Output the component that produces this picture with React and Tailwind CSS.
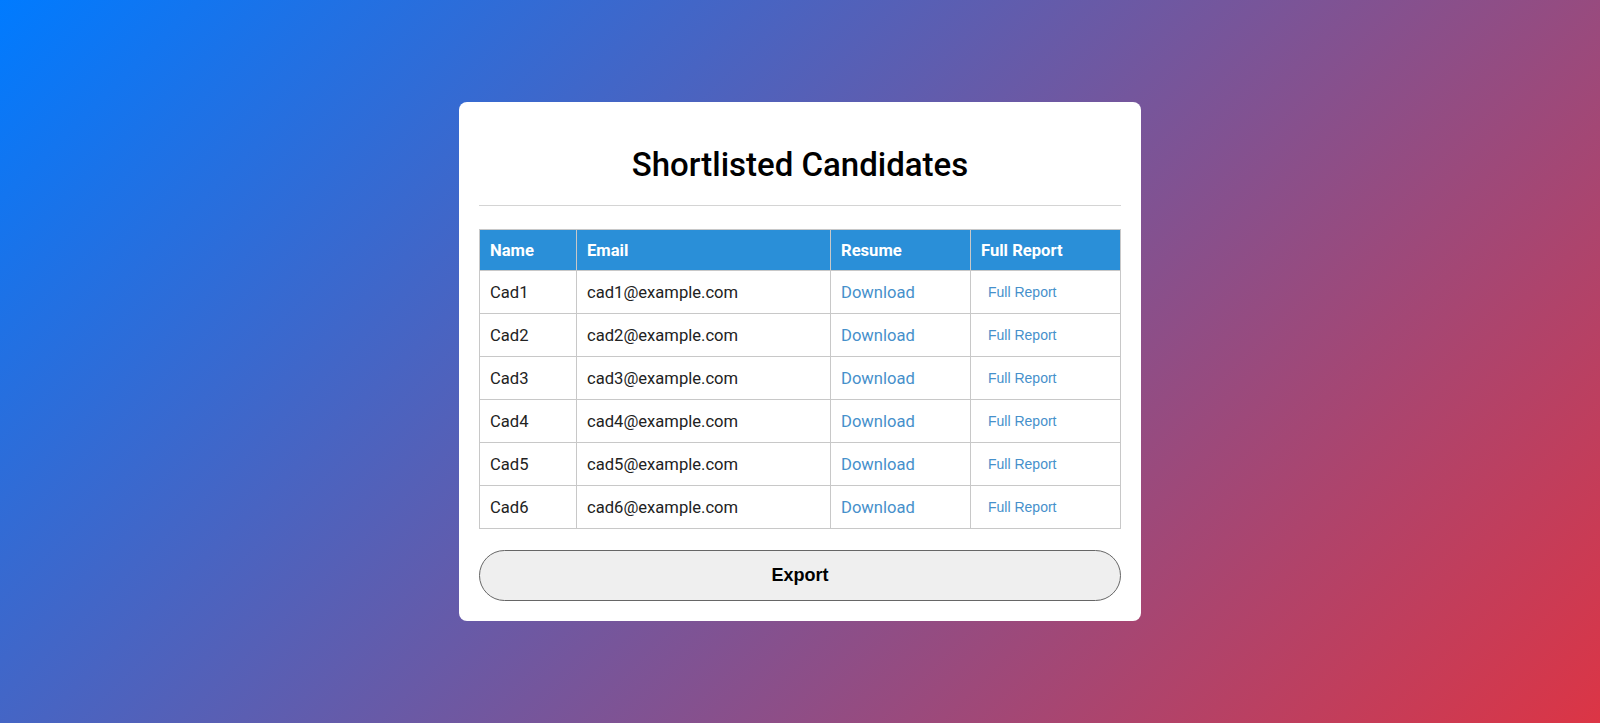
import React from "react";

const candidates = [1, 2, 3, 4, 5, 6].map((n) => ({
  name: `Cad${n}`,
  email: `cad${n}@example.com`,
}));

export default function App() {
  return (
    <div className="min-h-screen flex items-center justify-center bg-[linear-gradient(135deg,#007bff,#dc3545)] font-['Roboto',sans-serif]">
      <div className="w-[682px] bg-white rounded-lg px-5 pt-5 pb-5">
        <h2 className="mt-[25px] pb-[22px] border-b border-[#d4d4d4] text-center text-[33px] leading-[36px] font-medium text-black">
          Shortlisted Candidates
        </h2>

        <table className="mt-[23px] w-full border-collapse text-[16.6px] leading-[19px]">
          <colgroup>
            <col className="w-[97px]" />
            <col className="w-[254px]" />
            <col className="w-[140px]" />
            <col />
          </colgroup>
          <thead>
            <tr className="bg-[#2a8fd8] text-white">
              <th className="border border-[#c8c8c8] px-[10px] py-[10.5px] text-left font-bold">Name</th>
              <th className="border border-[#c8c8c8] px-[10px] py-[10.5px] text-left font-bold">Email</th>
              <th className="border border-[#c8c8c8] px-[10px] py-[10.5px] text-left font-bold">Resume</th>
              <th className="border border-[#c8c8c8] px-[10px] py-[10.5px] text-left font-bold">Full Report</th>
            </tr>
          </thead>
          <tbody>
            {candidates.map((c) => (
              <tr key={c.name}>
                <td className="border border-[#c8c8c8] px-[10px] py-[11px] text-[#222]">{c.name}</td>
                <td className="border border-[#c8c8c8] px-[10px] py-[11px] text-[#222]">{c.email}</td>
                <td className="border border-[#c8c8c8] px-[10px] py-[11px]">
                  <a href="#" className="text-[#4690cb]">Download</a>
                </td>
                <td className="border border-[#c8c8c8] px-[10px] py-[11px]">
                  <button className="px-[7px] font-['Liberation_Sans',Arial,sans-serif] text-[14px] text-[#4690cb] bg-transparent">
                    Full Report
                  </button>
                </td>
              </tr>
            ))}
          </tbody>
        </table>

        <button className="mt-[21px] w-full h-[51px] rounded-full border border-[#666] bg-[#efefef] font-['Liberation_Sans',Arial,sans-serif] text-[18px] font-bold text-black">
          Export
        </button>
      </div>
    </div>
  );
}
